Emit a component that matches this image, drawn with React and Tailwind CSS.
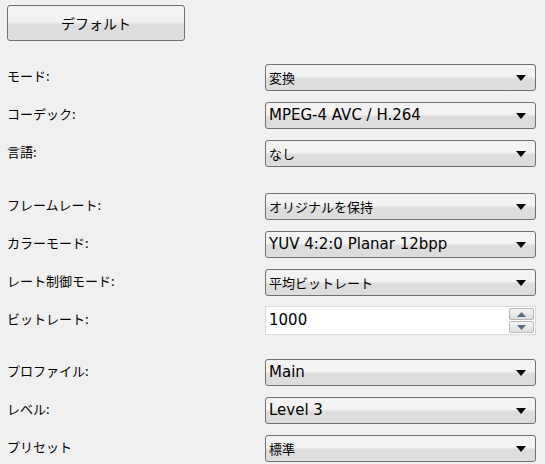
import React from "react";

const latin = { fontFamily: '"DejaVu Sans", "Noto Sans CJK JP", sans-serif' };
const cjk = { fontFamily: '"Noto Sans CJK JP", sans-serif' };

function Combo({ value, jpText = false }) {
  return (
    <div className="relative flex h-[27px] w-[271px] items-center rounded-[3px] border border-[#707070] bg-gradient-to-b from-[#f3f3f3] from-45% to-[#dddddd] to-55% pl-[3px] leading-none text-black">
      {jpText ? (
        <span className="text-[13px]" style={cjk}>{value}</span>
      ) : (
        <span className="text-[15px]" style={latin}>{value}</span>
      )}
      <svg className="absolute right-[9px] top-[10px]" width="10" height="6" viewBox="0 0 10 6">
        <path d="M0 0 H10 L5 6 Z" fill="#000" />
      </svg>
    </div>
  );
}

function Spin({ value }) {
  return (
    <div className="flex h-[29px] w-[271px] items-center border border-[#dcdcdc] bg-white pl-[3px] pr-[1px] text-[15px] leading-none">
      <span className="flex-1" style={latin}>{value}</span>
      <div className="flex h-[27px] w-[25px] flex-col gap-[1px] py-[1px]">
        <div className="flex flex-1 items-center justify-center rounded-[2px] border border-[#b8b8b8] bg-gradient-to-b from-[#f4f4f4] to-[#dedede]">
          <svg width="9" height="5" viewBox="0 0 9 5"><path d="M0 5 H9 L4.5 0 Z" fill="#5a6e8c" /></svg>
        </div>
        <div className="flex flex-1 items-center justify-center rounded-[2px] border border-[#b8b8b8] bg-gradient-to-b from-[#f4f4f4] to-[#dedede]">
          <svg width="9" height="5" viewBox="0 0 9 5"><path d="M0 0 H9 L4.5 5 Z" fill="#5a6e8c" /></svg>
        </div>
      </div>
    </div>
  );
}

function Row({ label, children, className = "" }) {
  return (
    <div className={"flex items-center " + className}>
      <div className="-mt-[3px] flex-1 text-[13px] text-black" style={cjk}>{label}</div>
      {children}
    </div>
  );
}

export default function App() {
  return (
    <div className="h-[464px] w-[545px] overflow-hidden bg-[#f0f0f0] pl-[7px] pr-[9px] pt-[5px]">
      <button
        className="flex h-[36px] w-[178px] items-center justify-center rounded-[3px] border border-[#707070] bg-gradient-to-b from-[#f2f2f2] from-45% to-[#dddddd] to-55% text-[14px] text-black"
        style={cjk}
      >
        デフォルト
      </button>
      <div className="mt-[23px] flex flex-col gap-[11px]">
        <Row label="モード:"><Combo value="変換" jpText /></Row>
        <Row label="コーデック:"><Combo value="MPEG-4 AVC / H.264" /></Row>
        <Row label="言語:"><Combo value="なし" jpText /></Row>
      </div>
      <div className="mt-[26px] flex flex-col gap-[11px]">
        <Row label="フレームレート:"><Combo value="オリジナルを保持" jpText /></Row>
        <Row label="カラーモード:"><Combo value="YUV 4:2:0 Planar 12bpp" /></Row>
        <Row label="レート制御モード:"><Combo value="平均ビットレート" jpText /></Row>
        <Row label="ビットレート:" className="-mt-[1px]"><Spin value="1000" /></Row>
      </div>
      <div className="mt-[24px] flex flex-col gap-[11px]">
        <Row label="プロファイル:"><Combo value="Main" /></Row>
        <Row label="レベル:"><Combo value="Level 3" /></Row>
        <Row label="プリセット"><Combo value="標準" jpText /></Row>
      </div>
    </div>
  );
}
